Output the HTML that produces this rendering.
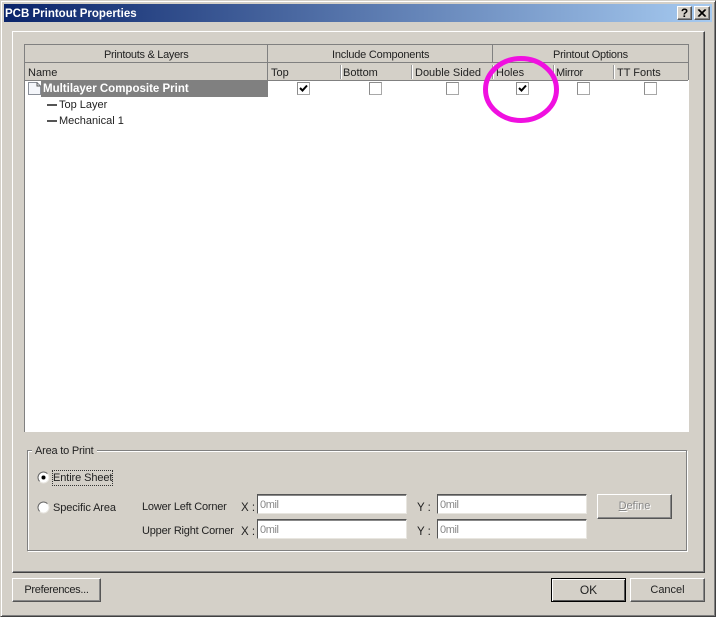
<!DOCTYPE html>
<html>
<head>
<meta charset="utf-8">
<style>
html,body{margin:0;padding:0;width:716px;height:617px;overflow:hidden;background:#d4d0c8}
body{position:relative;font-family:"Liberation Sans",sans-serif;font-size:11px;color:#222}
.a,.t{position:absolute}
.t{white-space:nowrap;line-height:14px}
.n{font-size:11px;letter-spacing:-.2px}
.c{position:absolute;box-sizing:border-box;width:13px;height:13px;top:82px;background:#fff;border:1px solid #8c8c8c;border-right-color:#a8a8a8;border-bottom-color:#a8a8a8}
.in{position:absolute;box-sizing:border-box;background:#fff;border:1px solid;border-color:#555 #e8e6e0 #e8e6e0 #555;height:20px;box-shadow:inset 0 1px 0 #888}
.in span{position:absolute;left:2px;top:3px;color:#888;line-height:14px;font-size:11px;letter-spacing:-.4px}
.b{position:absolute;box-sizing:border-box;background:#d4d0c8;border:1px solid;border-color:#fff #555 #555 #fff;text-align:center;font-size:11px;line-height:23px;box-shadow:inset -1px -1px 0 #888}
.sep{position:absolute;width:1px;background:#999;box-shadow:1px 0 0 #fff}
</style>
</head>
<body>
<!-- window frame -->
<div class="a" style="left:0;top:0;width:716px;height:617px;box-sizing:border-box;border:1px solid;border-color:#d4d0c8 #404040 #404040 #d4d0c8;box-shadow:inset 1px 1px 0 #fff,inset -1px -1px 0 #808080"></div>
<!-- title bar -->
<div class="a" style="left:4px;top:4px;width:708px;height:18px;background:linear-gradient(90deg,#0a246a,#a6caf0)"></div>
<div class="t" style="left:5px;top:7px;color:#fff;font-weight:bold;font-size:11.5px">PCB Printout Properties</div>
<div class="b" style="left:677px;top:6px;width:15px;height:14px;font-size:12px;line-height:12px;font-weight:bold;color:#000">?</div>
<div class="b" style="left:694px;top:6px;width:16px;height:14px;color:#000">
<svg width="14" height="12" style="position:absolute;left:0;top:0"><path d="M3 2.5L10 9.5M4 2.5L11 9.5M10 2.5L3 9.5M11 2.5L4 9.5" stroke="#000" stroke-width="1" fill="none"/></svg>
</div>
<!-- tab panel -->
<div class="a" style="left:12px;top:31px;width:693px;height:542px;box-sizing:border-box;border:1px solid;border-color:#fff #404040 #404040 #fff;box-shadow:inset -1px -1px 0 #808080"></div>
<!-- table -->
<div class="a" style="left:24px;top:44px;width:665px;height:388px;background:#fff"></div>
<div class="a" style="left:24px;top:44px;width:664px;height:37px;background:#d4d0c8;border-top:1px solid #808080;box-sizing:border-box;border-bottom:1px solid #808080"></div>
<div class="a" style="left:24px;top:44px;width:1px;height:388px;background:#808080"></div>
<div class="a" style="left:24px;top:62px;width:664px;height:1px;background:#808080"></div>
<div class="a" style="left:267px;top:44px;width:1px;height:19px;background:#808080"></div>
<div class="a" style="left:492px;top:44px;width:1px;height:19px;background:#808080"></div>
<div class="a" style="left:688px;top:44px;width:1px;height:36px;background:#808080"></div>
<div class="a" style="left:267px;top:63px;width:1px;height:17px;background:#808080"></div>
<div class="sep" style="left:340px;top:65px;height:14px"></div>
<div class="sep" style="left:411px;top:65px;height:14px"></div>
<div class="sep" style="left:492px;top:65px;height:14px"></div>
<div class="sep" style="left:553px;top:65px;height:14px"></div>
<div class="sep" style="left:613px;top:65px;height:14px"></div>
<div class="t n" style="left:104px;top:48px;letter-spacing:-.3px">Printouts &amp; Layers</div>
<div class="t n" style="left:332px;top:48px">Include Components</div>
<div class="t n" style="left:553px;top:48px;letter-spacing:-.25px">Printout Options</div>
<div class="t" style="left:28px;top:66px">Name</div>
<div class="t" style="left:271px;top:66px">Top</div>
<div class="t" style="left:343px;top:66px">Bottom</div>
<div class="t" style="left:415px;top:66px">Double Sided</div>
<div class="t" style="left:496px;top:66px">Holes</div>
<div class="t" style="left:556px;top:66px;letter-spacing:-.3px">Mirror</div>
<div class="t" style="left:617px;top:66px">TT Fonts</div>
<!-- row 1 -->
<div class="a" style="left:41px;top:81px;width:227px;height:16px;background:#808080"></div>
<svg class="a" style="left:27px;top:81px" width="15" height="15"><path d="M1.5 1.5H10L13.5 5V13.5H1.5Z" fill="#f4f6fa" stroke="#8a8f98"/><path d="M10 1.5V5H13.5" fill="none" stroke="#555"/></svg>
<div class="t" style="left:43px;top:82px;color:#fff;font-weight:bold;font-size:11.5px">Multilayer Composite Print</div>
<div class="a" style="left:47px;top:104px;width:10px;height:2px;background:#555"></div>
<div class="t" style="left:59px;top:98px">Top Layer</div>
<div class="a" style="left:47px;top:120px;width:10px;height:2px;background:#555"></div>
<div class="t" style="left:59px;top:114px">Mechanical 1</div>
<!-- checkboxes -->
<div class="c" style="left:297px"><svg width="11" height="11" style="position:absolute;left:0;top:0"><path d="M2 5L4.5 7.5L9 2.5" stroke="#000" stroke-width="2" fill="none"/></svg></div>
<div class="c" style="left:369px"></div>
<div class="c" style="left:446px"></div>
<div class="c" style="left:516px"><svg width="11" height="11" style="position:absolute;left:0;top:0"><path d="M2 5L4.5 7.5L9 2.5" stroke="#000" stroke-width="2" fill="none"/></svg></div>
<div class="c" style="left:577px"></div>
<div class="c" style="left:644px"></div>
<!-- magenta circle -->
<svg class="a" style="left:480px;top:53px" width="84" height="74"><ellipse cx="41" cy="36.5" rx="35.5" ry="31" fill="none" stroke="#f010e0" stroke-width="5"/></svg>
<!-- group box -->
<div class="a" style="left:27px;top:450px;width:660px;height:101px;box-sizing:border-box;border:1px solid #808080;box-shadow:1px 1px 0 #fff,inset 1px 1px 0 #fff"></div>
<div class="t n" style="left:32px;top:444px;background:#d4d0c8;padding:0 3px;letter-spacing:-.2px">Area to Print</div>
<!-- radios -->
<svg class="a" style="left:37px;top:471px" width="13" height="13"><circle cx="6.5" cy="6.5" r="5.5" fill="#fff" stroke="#e8e6e0"/><path d="M2.6 10.4A5.5 5.5 0 0 1 10.4 2.6" fill="none" stroke="#666"/><circle cx="6.5" cy="6.5" r="2" fill="#000"/></svg>
<svg class="a" style="left:37px;top:501px" width="13" height="13"><circle cx="6.5" cy="6.5" r="5.5" fill="#fff" stroke="#e8e6e0"/><path d="M2.6 10.4A5.5 5.5 0 0 1 10.4 2.6" fill="none" stroke="#666"/></svg>
<div class="t" style="left:52px;top:470px;border:1px dotted #333;height:14px;width:59px"></div>
<div class="t" style="left:53px;top:471px;letter-spacing:-.1px">Entire Sheet</div>
<div class="t" style="left:53px;top:501px;letter-spacing:-.1px">Specific Area</div>
<div class="t n" style="left:142px;top:500px">Lower Left Corner</div>
<div class="t n" style="left:142px;top:524px">Upper Right Corner</div>
<div class="t" style="left:241px;top:501px;font-size:11.5px">X :</div>
<div class="t" style="left:241px;top:525px;font-size:11.5px">X :</div>
<div class="t" style="left:417px;top:501px;font-size:11.5px">Y :</div>
<div class="t" style="left:417px;top:525px;font-size:11.5px">Y :</div>
<div class="in" style="left:257px;top:494px;width:150px"><span>0mil</span></div>
<div class="in" style="left:257px;top:519px;width:150px"><span>0mil</span></div>
<div class="in" style="left:437px;top:494px;width:150px"><span>0mil</span></div>
<div class="in" style="left:437px;top:519px;width:150px"><span>0mil</span></div>
<!-- buttons -->
<div class="b" style="left:597px;top:494px;width:75px;height:25px;color:#888;text-shadow:1px 1px 0 #fff"><u>D</u>efine</div>
<div class="b" style="left:12px;top:578px;width:89px;height:24px;letter-spacing:-.3px">Preferences...</div>
<div class="b" style="left:551px;top:578px;width:75px;height:24px;border:1px solid #000;box-shadow:inset 1px 1px 0 #fff,inset -1px -1px 0 #555;font-size:12px">OK</div>
<div class="b" style="left:630px;top:578px;width:75px;height:24px">Cancel</div>
</body>
</html>
